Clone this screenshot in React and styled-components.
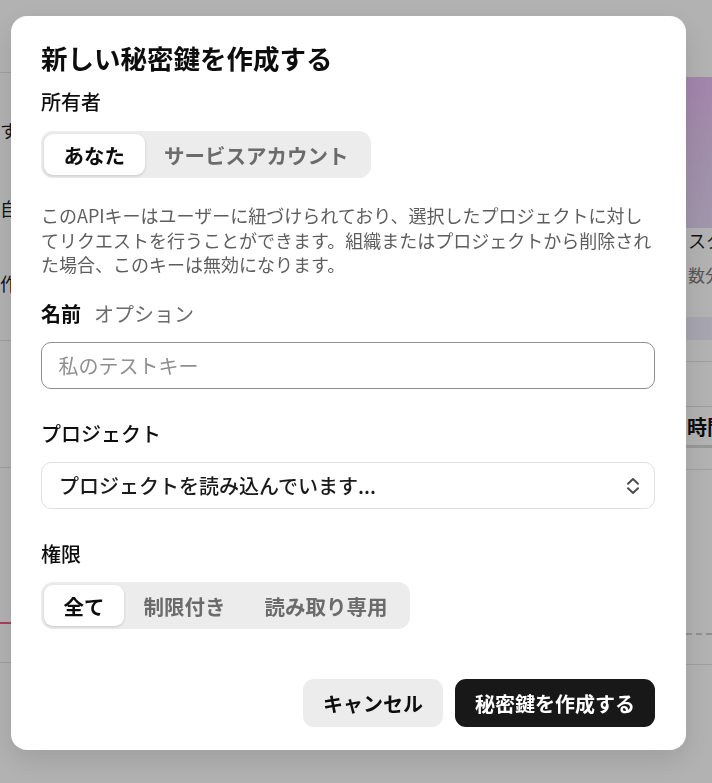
import styled, { createGlobalStyle } from "styled-components";

const GlobalStyle = createGlobalStyle`
  html, body {
    margin: 0;
    padding: 0;
    overflow: hidden;
    font-family: "Noto Sans CJK JP", "Noto Sans", sans-serif;
    -webkit-font-smoothing: antialiased;
  }
  * { box-sizing: border-box; }
`;

/* ---------- page behind the dialog ---------- */

const Page = styled.div`
  display: grid;
  grid-template-columns: 686px 1fr;
  width: 712px;
  height: 783px;
  background: #fff;
  overflow: hidden;
`;

const Pane = styled.div`
  display: flex;
  flex-direction: column;
  overflow: hidden;
`;

const Rule = styled.div`
  flex: none;
  margin-top: ${(p) => p.$mt || 0}px;
  border-top: ${(p) => p.$w || 1}px ${(p) => (p.$dashed ? "dashed" : "solid")}
    ${(p) => p.$color || "#e3e3e3"};
`;

const PageText = styled.div`
  flex: none;
  margin-top: ${(p) => p.$mt || 0}px;
  font-size: ${(p) => p.$size || 18}px;
  font-weight: ${(p) => p.$weight || 400};
  line-height: 24px;
  color: ${(p) => p.$color || "#1a1a1a"};
  white-space: nowrap;
  padding-left: ${(p) => p.$pl || 0}px;
`;

const Hero = styled.div`
  flex: none;
  margin-top: 77px;
  height: 151px;
  background: linear-gradient(160deg, #ebbef6 0%, #e6cff4 60%, #e6d8f6 100%);
`;

const Band = styled.div`
  flex: none;
  margin-top: 30px;
  height: 23px;
  background: #efecfc;
`;

const TabBox = styled.div`
  flex: none;
  margin-top: 44px;
  height: 42px;
  display: flex;
  align-items: center;
  border-top: 1px solid #e0e0e0;
  border-bottom: 3px solid #d9d9d9;
  font-size: 20px;
  font-weight: 700;
  color: #111;
  white-space: nowrap;
  padding-left: 1px;
`;

/* ---------- dialog ---------- */

const Overlay = styled.div`
  position: fixed;
  inset: 0;
  background: rgba(0, 0, 0, 0.3);
  display: flex;
  align-items: flex-start;
  padding: 16px 0 0 11px;
`;

const Dialog = styled.div`
  width: 675px;
  background: #fff;
  border-radius: 16px;
  padding: 24px 31px 23px 30px;
  box-shadow: 0 10px 30px rgba(0, 0, 0, 0.12);
  display: flex;
  flex-direction: column;
`;

const Title = styled.h2`
  margin: 0 0 12px;
  font-size: 26.5px;
  font-weight: 700;
  line-height: 36px;
  color: #0d0d0d;
`;

const Field = styled.div`
  display: flex;
  flex-direction: column;
  align-items: stretch;
  gap: ${(p) => p.$gap || 14}px;
  margin-top: ${(p) => p.$mt || 0}px;
`;

const Label = styled.div`
  display: flex;
  align-items: baseline;
  gap: 13px;
  font-size: 20px;
  font-weight: 500;
  line-height: 28px;
  color: #0d0d0d;
`;

const Strong = styled.span`
  font-weight: 700;
`;

const Hint = styled.span`
  font-weight: 400;
  color: #6b6b6b;
`;

const Segmented = styled.div`
  align-self: flex-start;
  display: flex;
  padding: 3px;
  height: 47px;
  background: #ececec;
  border-radius: 12px;
`;

const Segment = styled.button`
  height: 41px;
  padding: 0 19.5px;
  border: 0;
  border-radius: 9px;
  font-family: inherit;
  font-size: 20.5px;
  font-weight: 700;
  white-space: nowrap;
  background: ${(p) => (p.$active ? "#fff" : "transparent")};
  color: ${(p) => (p.$active ? "#0d0d0d" : "#6b6b6b")};
  box-shadow: ${(p) => (p.$active ? "0 1px 3px rgba(0,0,0,0.16)" : "none")};
`;

const Description = styled.p`
  margin: 25px 0 0;
  font-size: 18px;
  line-height: 24.5px;
  color: #5d5d5d;
`;

const TextInput = styled.input`
  height: 47px;
  width: 100%;
  padding: 0 16.5px;
  border: 1.5px solid #8e8e8e;
  border-radius: 10px;
  font-family: inherit;
  font-size: 20px;
  color: #0d0d0d;
  outline: none;
  &::placeholder {
    color: #8f8f8f;
  }
`;

const Select = styled.div`
  height: 47px;
  display: flex;
  align-items: center;
  justify-content: space-between;
  padding: 0 13px 0 17px;
  border: 1.5px solid #e0e0e0;
  border-radius: 10px;
  font-size: 20px;
  font-weight: 500;
  color: #1a1a1a;
`;

const Footer = styled.div`
  display: flex;
  justify-content: flex-end;
  gap: 12px;
  margin-top: 50px;
`;

const Button = styled.button`
  height: 48px;
  padding: 0 20px;
  border: 0;
  border-radius: 11px;
  font-family: inherit;
  font-size: 20px;
  font-weight: 700;
  white-space: nowrap;
  background: ${(p) => (p.$primary ? "#181818" : "#ececec")};
  color: ${(p) => (p.$primary ? "#fff" : "#0d0d0d")};
`;

const UpDownIcon = () => (
  <svg width="16" height="20" viewBox="0 0 16 20" fill="none" stroke="#4a4a4a"
    strokeWidth="1.9" strokeLinecap="round" strokeLinejoin="round">
    <polyline points="3,7.8 8,3 13,7.8" />
    <polyline points="3,12.2 8,17 13,12.2" />
  </svg>
);

const owners = ["あなた", "サービスアカウント"];
const permissions = ["全て", "制限付き", "読み取り専用"];

export default function App() {
  return (
    <>
      <GlobalStyle />
      <Page>
        <Pane>
          <Rule $mt={72} />
          <PageText $mt={45}>すべてのプロジェクトで使用できます</PageText>
          <PageText $mt={54}>自動的に作成されたキー</PageText>
          <PageText $mt={51}>作成日時で並べ替え</PageText>
          <Rule $mt={45} />
          <Rule $mt={126} />
          <Rule $mt={154} $w={2} $color="#f05a88" />
          <Rule $mt={38} />
        </Pane>
        <Pane>
          <Hero />
          <PageText $pl={2}>スタート</PageText>
          <PageText $mt={11} $size={17} $color="#7a7a7a" $pl={2}>
            数分で
          </PageText>
          <Band />
          <Rule $mt={21} />
          <TabBox>時間</TabBox>
          <Rule $mt={21} />
          <Rule $mt={163} $w={2} $dashed $color="#cfcfcf" />
          <Rule $mt={29} />
        </Pane>
      </Page>

      <Overlay>
        <Dialog>
          <Title>新しい秘密鍵を作成する</Title>

          <Field $gap={15}>
            <Label>所有者</Label>
            <Segmented>
              {owners.map((o, i) => (
                <Segment key={o} $active={i === 0}>
                  {o}
                </Segment>
              ))}
            </Segmented>
          </Field>

          <Description>
            このAPIキーはユーザーに紐づけられており、選択したプロジェクトに対してリクエストを行うことができます。組織またはプロジェクトから削除された場合、このキーは無効になります。
          </Description>

          <Field $mt={23.5}>
            <Label>
              <Strong>名前</Strong>
              <Hint>オプション</Hint>
            </Label>
            <TextInput placeholder="私のテストキー" />
          </Field>

          <Field $mt={31}>
            <Label>プロジェクト</Label>
            <Select>
              <span>プロジェクトを読み込んでいます...</span>
              <UpDownIcon />
            </Select>
          </Field>

          <Field $mt={31}>
            <Label>権限</Label>
            <Segmented>
              {permissions.map((p, i) => (
                <Segment key={p} $active={i === 0}>
                  {p}
                </Segment>
              ))}
            </Segmented>
          </Field>

          <Footer>
            <Button>キャンセル</Button>
            <Button $primary>秘密鍵を作成する</Button>
          </Footer>
        </Dialog>
      </Overlay>
    </>
  );
}
